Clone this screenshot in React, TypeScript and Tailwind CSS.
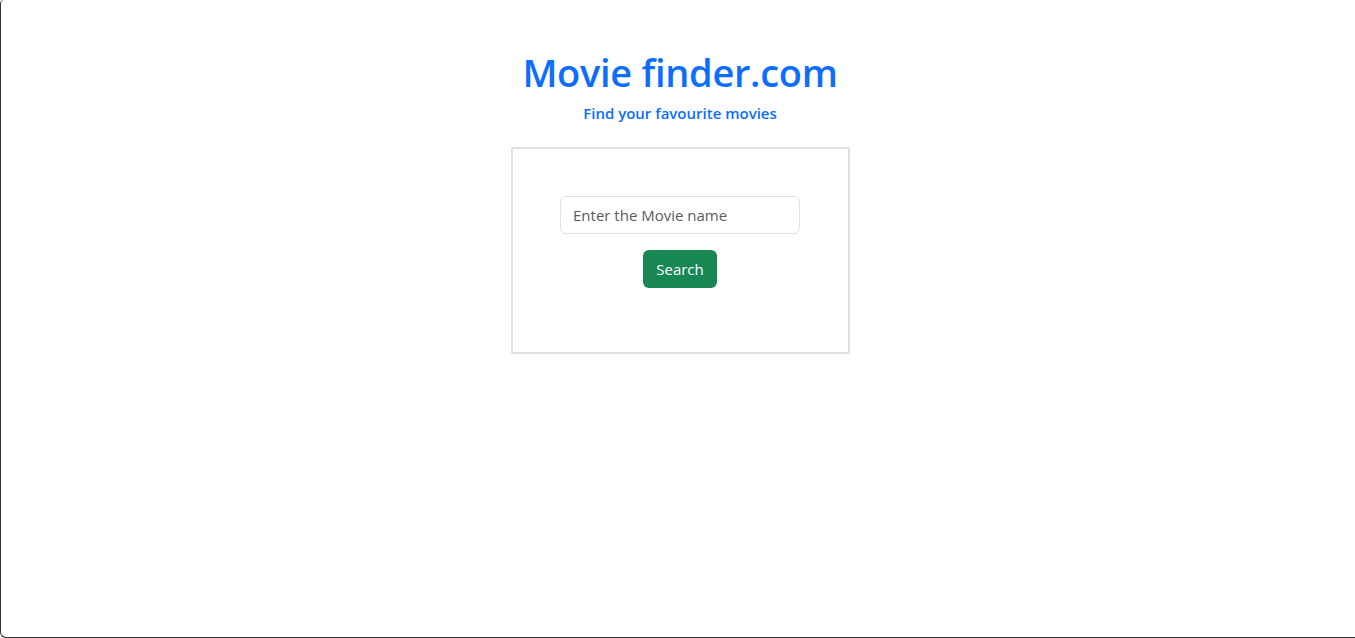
import { useState } from 'react'

export default function App() {
  const [query, setQuery] = useState('')

  return (
    <div className="h-[638px] w-full bg-white border-l border-b border-[#333] rounded-bl-md rounded-tl-sm overflow-hidden font-['Open_Sans',sans-serif]">
      <div className="flex flex-col items-center pt-[48px] pl-[4px]">
        <h1 className="text-[38px] leading-[48px] font-semibold text-[#0d6efd] tracking-[-0.3px]">Movie finder.com</h1>
        <h6 className="mt-[7px] text-[15px] leading-[20px] font-semibold text-[#0d6efd]">Find your favourite movies</h6>

        <div className="mt-[24px] w-[339px] h-[207px] border-2 border-[#dee2e6] flex flex-col items-center pt-[47px]">
          <input
            value={query}
            onChange={(e) => setQuery(e.target.value)}
            placeholder="Enter the Movie name"
            className="w-[240px] h-[38px] px-3 border border-[#dee2e6] rounded-md text-[15px] text-[#212529] placeholder:text-[#595c5f] outline-none"
          />
          <button className="mt-4 h-[38px] w-[74px] rounded-md bg-[#198754] text-white text-[15px]">
            Search
          </button>
        </div>
      </div>
    </div>
  )
}
